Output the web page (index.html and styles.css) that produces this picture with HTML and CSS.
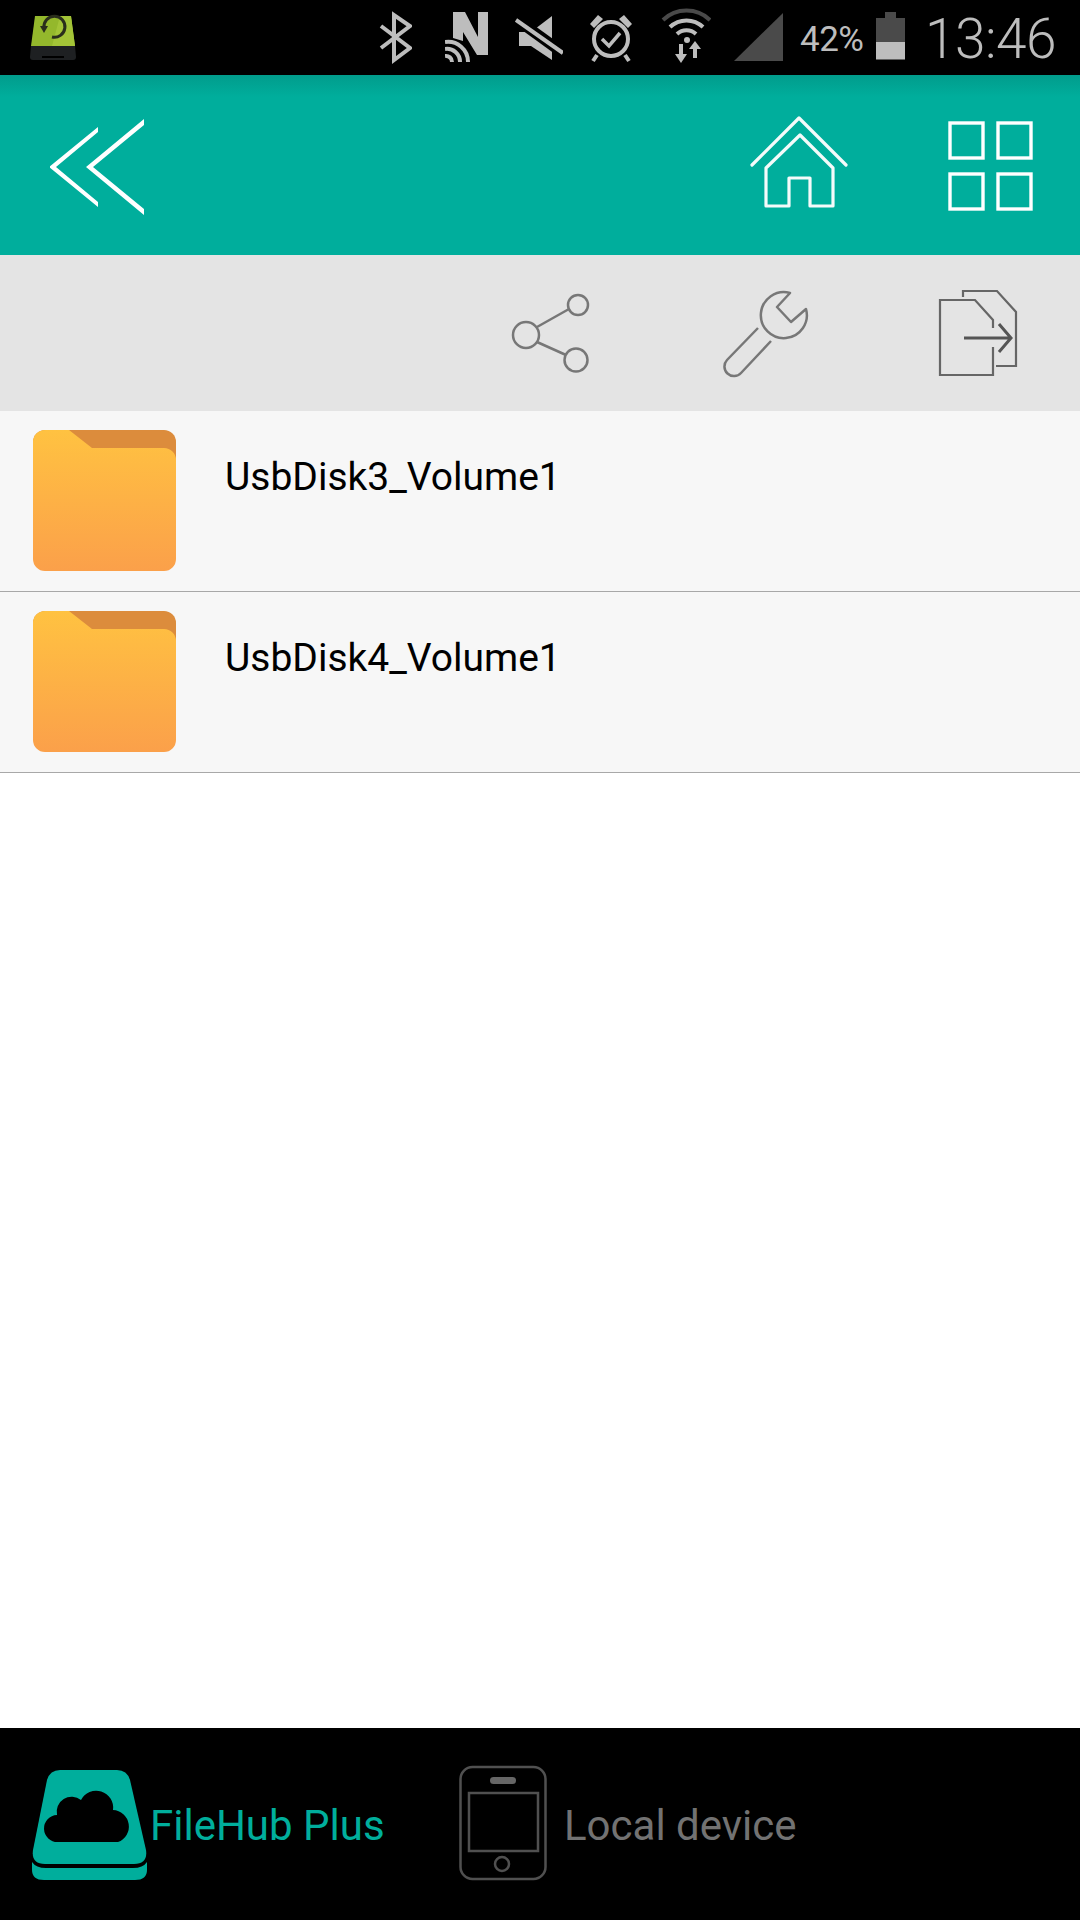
FILE: index.html
```html
<!DOCTYPE html>
<html lang="en">
<head>
  <meta charset="UTF-8">
  <title>FileHub Plus</title>
  <link rel="stylesheet" href="styles.css">
</head>
<body>
  <div class="status-bar">
    <svg class="st-app" viewBox="30 0 46 75">
      <path d="M35 16H71L75 46H31Z" fill="#94b82c"/>
      <path d="M60 16H71L75 46H52Z" fill="#a3c437"/>
      <path d="M31 46H75L76 57Q76 60 73 60H33Q30 60 30 57Z" fill="#1e2022"/>
      <rect x="42" y="56" width="22" height="2" fill="#000"/>
      <path d="M44 28A10.500 10.500 0 1 1 52 37" fill="none" stroke="#2a2e1c" stroke-width="3"/>
      <path d="M40 26H48L44 33Z" fill="#2a2e1c"/>
    </svg>
    <svg class="st-bt" viewBox="379 0 33 75">
      <path d="M381 26L410 48L394 60V15L410 26L381 48" fill="none" stroke="#bdbdbd" stroke-width="4"/>
    </svg>
    <svg class="st-nfc" viewBox="445 0 43 75">
      <path d="M453 12H465L478 37V12H488V55H477L463 32V41L453 38Z" fill="#bdbdbd"/>
      <g fill="none" stroke="#bdbdbd" stroke-width="4">
        <path d="M445 42A20 20 0 0 1 468 62"/>
        <path d="M445 49A13 13 0 0 1 460 62"/>
        <path d="M445 56A6 6 0 0 1 452 62"/>
      </g>
    </svg>
    <svg class="st-mute" viewBox="515 0 48 75">
      <path d="M519 32H531L552 16V60L531 46H519Z" fill="#bdbdbd"/>
      <path d="M516 19L563 53" stroke="#000" stroke-width="11"/>
      <path d="M516 20L563 53" stroke="#bdbdbd" stroke-width="4"/>
    </svg>
    <svg class="st-alarm" viewBox="589 0 44 75">
      <circle cx="611" cy="39" r="17" fill="none" stroke="#bdbdbd" stroke-width="4"/>
      <path d="M590 24L598 15L603 19L594 28Z M632 24L624 15L619 19L628 28Z" fill="#bdbdbd"/>
      <path d="M597 55L593 61M625 55L629 61" stroke="#bdbdbd" stroke-width="4"/>
      <path d="M602 39L609 46L620 33" fill="none" stroke="#bdbdbd" stroke-width="3.500"/>
    </svg>
    <svg class="st-wifi" viewBox="661 0 50 75">
      <path d="M663 20A34 34 0 0 1 710 20" fill="none" stroke="#4a4a4a" stroke-width="4"/>
      <path d="M670 27A24 24 0 0 1 703 27" fill="none" stroke="#bdbdbd" stroke-width="4"/>
      <path d="M677 34A14 14 0 0 1 696 34" fill="none" stroke="#bdbdbd" stroke-width="4"/>
      <circle cx="687" cy="40" r="3" fill="#bdbdbd"/>
      <path d="M681 44V56" stroke="#bdbdbd" stroke-width="4"/>
      <path d="M675 54H687L681 63Z" fill="#bdbdbd"/>
      <path d="M695 47V58" stroke="#bdbdbd" stroke-width="4"/>
      <path d="M689 49H701L695 41Z" fill="#bdbdbd"/>
    </svg>
    <svg class="st-signal" viewBox="734 0 49 75">
      <path d="M734 61H783V13Z" fill="#4a4a4a"/>
    </svg>
    <span class="st-pct">42%</span>
    <svg class="st-batt" viewBox="876 0 29 75">
      <path d="M885 12H896V18H905V42H876V18H885Z" fill="#4a4a4a"/>
      <rect x="876" y="42" width="29" height="17.500" fill="#bdbdbd"/>
    </svg>
    <span class="st-time">13:46</span>
  </div>

  <div class="top-bar">
    <svg class="back-icon" viewBox="50 75 94 180">
      <path d="M49 167L98 127V132L56 167L98 202V207Z" fill="#fff"/>
      <path d="M86 167L144 119V125L93 167L144 209V215Z" fill="#fff"/>
    </svg>
    <svg class="home-icon" viewBox="750 75 98 180">
      <g fill="none" stroke="#f4fbfa" stroke-width="3.200" stroke-linecap="round" stroke-linejoin="round">
        <path d="M752 165L799 118L846 165"/>
        <path d="M766 168L800 135L833 168V206H810V178H789V206H766Z"/>
      </g>
    </svg>
    <svg class="grid-icon" viewBox="948 75 85 180">
      <g fill="none" stroke="#fff" stroke-width="3.400">
        <rect x="950" y="123" width="33" height="35"/>
        <rect x="998" y="123" width="33" height="35"/>
        <rect x="950" y="174" width="33" height="35"/>
        <rect x="998" y="174" width="33" height="35"/>
      </g>
    </svg>
  </div>

  <div class="tool-bar">
    <svg class="share-icon" viewBox="510 255 80 156">
      <g fill="none" stroke="#777" stroke-width="2.500">
        <circle cx="526" cy="335" r="13"/>
        <circle cx="578" cy="305" r="10"/>
        <circle cx="576" cy="360" r="11.500"/>
        <path d="M537 327L569 309M537 342L566 355"/>
      </g>
    </svg>
    <svg class="wrench-icon" viewBox="720 255 90 156">
      <g fill="none" stroke="#777" stroke-width="2.500" stroke-linejoin="round">
        <path d="M790 293L777 307L791 322L806 309A23 23 0 1 1 790 293Z"/>
        <path d="M758 328L727 360A9 9 0 0 0 741 373L771 341"/>
      </g>
    </svg>
    <svg class="file-icon" viewBox="938 255 80 156">
      <g fill="none" stroke="#666" stroke-width="2.200">
        <path d="M993 328V320L975 300H940V375H993V347"/>
        <path d="M963 297V291H997L1016 312V366H996"/>
      </g>
      <path d="M964 338H1011M999 324L1011 338L999 352" fill="none" stroke="#555" stroke-width="3"/>
    </svg>
  </div>

  <div class="file-row">
    <svg class="folder" viewBox="0 0 143 141">
      <defs>
        <linearGradient id="folderFill" x1="0" y1="0" x2="0" y2="1">
          <stop offset="0" stop-color="#ffc241"/>
          <stop offset="1" stop-color="#fba04a"/>
        </linearGradient>
      </defs>
      <rect width="143" height="60" rx="12" fill="#dc8c3c"/>
      <path d="M0 12A12 12 0 0 1 12 0H36L59 18H131A12 12 0 0 1 143 30V129A12 12 0 0 1 131 141H12A12 12 0 0 1 0 129Z" fill="url(#folderFill)"/>
    </svg>
    <span class="file-name">UsbDisk3_Volume1</span>
  </div>
  <div class="file-row">
    <svg class="folder" viewBox="0 0 143 141">
      <rect width="143" height="60" rx="12" fill="#dc8c3c"/>
      <path d="M0 12A12 12 0 0 1 12 0H36L59 18H131A12 12 0 0 1 143 30V129A12 12 0 0 1 131 141H12A12 12 0 0 1 0 129Z" fill="url(#folderFill)"/>
    </svg>
    <span class="file-name">UsbDisk4_Volume1</span>
  </div>

  <div class="spacer"></div>

  <div class="bottom-nav">
    <div class="tab tab-hub">
      <svg class="hub-icon" viewBox="32 1728 115 192">
        <path d="M60 1770H117Q127 1770 130 1780L146 1850Q148 1864 134 1864H45Q31 1864 33 1850L47 1780Q50 1770 60 1770Z" fill="#00ae9c"/>
        <path d="M32 1862Q36 1868 46 1868H133Q143 1868 147 1862V1870Q147 1880 135 1880H44Q32 1880 32 1870Z" fill="#00ae9c"/>
        <path d="M58 1842A13 13 0 0 1 57 1815A15 15 0 0 1 81 1800A17 17 0 0 1 113 1810A16.500 16.500 0 0 1 118 1842Z" fill="#000"/>
      </svg>
      <span class="tab-label">FileHub Plus</span>
    </div>
    <div class="tab tab-local">
      <svg class="phone-icon" viewBox="459 1728 88 192">
        <g fill="none" stroke="#505050" stroke-width="2.500">
          <rect x="460.500" y="1767" width="85" height="112" rx="12"/>
          <rect x="469" y="1793" width="69" height="58"/>
          <circle cx="502" cy="1864" r="7"/>
        </g>
        <rect x="490" y="1777" width="26" height="7" rx="3.500" fill="#666"/>
      </svg>
      <span class="tab-label">Local device</span>
    </div>
  </div>
</body>
</html>
```

FILE: styles.css
```css
html, body {
  height: 100%;
}

body {
  margin: 0;
  display: flex;
  flex-direction: column;
  background-color: #fff;
  font-family: Roboto, sans-serif;
}

svg {
  display: block;
  flex: none;
}

/* status bar */
.status-bar {
  display: flex;
  align-items: stretch;
  height: 75px;
  background-color: #000;
  color: #bdbdbd;
}

.status-bar svg {
  height: 75px;
}

.st-app    { width: 46px; margin-left: 30px; }
.st-bt     { width: 33px; margin-left: 303px; }
.st-nfc    { width: 43px; margin-left: 33px; }
.st-mute   { width: 48px; margin-left: 27px; }
.st-alarm  { width: 44px; margin-left: 26px; }
.st-wifi   { width: 50px; margin-left: 28px; }
.st-signal { width: 49px; margin-left: 23px; }
.st-batt   { width: 29px; margin-left: 11px; }

.st-pct {
  width: 65px;
  margin-left: 17px;
  font-size: 35px;
  line-height: 79px;
  white-space: nowrap;
  letter-spacing: -0.5px;
}

.st-time {
  margin-left: 20px;
  font-size: 55px;
  font-weight: 300;
  line-height: 79px;
  white-space: nowrap;
  letter-spacing: -0.5px;
}

/* teal header */
.top-bar {
  display: flex;
  height: 180px;
  background: linear-gradient(#019c8c, #00ae9c 22px);
}

.top-bar svg {
  height: 180px;
}

.back-icon { width: 94px; margin-left: 50px; }
.home-icon { width: 98px; margin-left: auto; }
.grid-icon { width: 85px; margin-left: 100px; margin-right: 47px; }

/* grey toolbar */
.tool-bar {
  display: flex;
  height: 156px;
  background-color: #e4e4e4;
}

.tool-bar svg {
  height: 156px;
}

.share-icon  { width: 80px; margin-left: 510px; }
.wrench-icon { width: 90px; margin-left: 130px; }
.file-icon   { width: 80px; margin-left: 128px; }

/* folder list */
.file-row {
  display: flex;
  align-items: flex-start;
  height: 180px;
  background-color: #f7f7f7;
  border-bottom: 1px solid #a8a8a8;
}

.folder {
  width: 143px;
  height: 141px;
  margin: 19px 0 0 33px;
}

.file-name {
  margin: 43px 0 0 49px;
  font-size: 39px;
  line-height: 46px;
  color: #000;
}

.spacer {
  flex: 1;
}

/* bottom tabs */
.bottom-nav {
  display: flex;
  height: 192px;
  background-color: #000;
}

.tab {
  display: flex;
  align-items: center;
}

.tab svg {
  height: 192px;
}

.tab-label {
  padding-top: 2px;
  font-size: 42px;
}

.tab-hub {
  width: 459px;
  padding-left: 32px;
  box-sizing: border-box;
  color: #00ae9c;
}

.tab-hub .tab-label {
  margin-left: 3px;
}

.tab-local {
  color: #727272;
}

.tab-local .tab-label {
  margin-left: 17px;
}

.hub-icon   { width: 115px; }
.phone-icon { width: 88px; }
```
